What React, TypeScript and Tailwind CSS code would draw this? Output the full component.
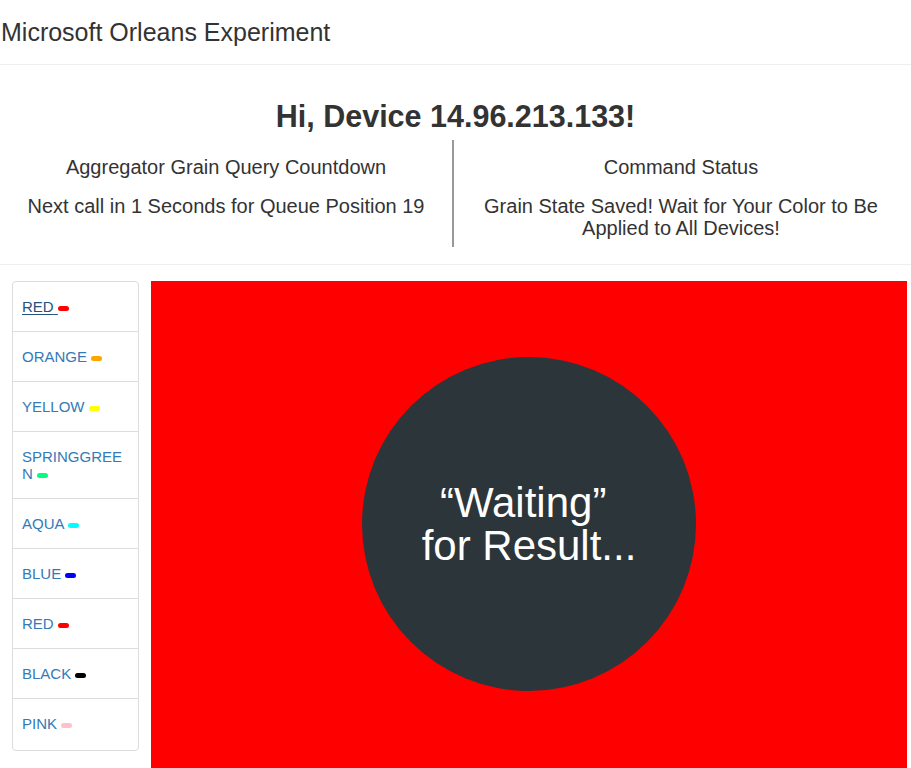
const colors = [
  { name: "RED", swatch: "bg-[#ff0000]", active: true },
  { name: "ORANGE", swatch: "bg-[#ffa500]" },
  { name: "YELLOW", swatch: "bg-[#ffff00]" },
  { name: "SPRINGGREEN", swatch: "bg-[#00ff7f]" },
  { name: "AQUA", swatch: "bg-[#00ffff]" },
  { name: "BLUE", swatch: "bg-[#0000ff]" },
  { name: "RED", swatch: "bg-[#ff0000]" },
  { name: "BLACK", swatch: "bg-[#000000]" },
  { name: "PINK", swatch: "bg-[#ffc0cb]" },
];

function ColorList() {
  return (
    <ul className="w-[127px] shrink-0 rounded-[4px] border border-[#ddd] bg-white">
      {colors.map((c, i) => (
        <li
          key={i}
          className={`px-[9px] py-4 text-[15px] leading-[17px] break-all ${
            i < colors.length - 1 ? "border-b border-[#ddd]" : "pb-[18px]"
          }`}
        >
          <a
            href="#"
            className={
              c.active
                ? "text-[#23527c] underline underline-offset-2"
                : "text-[#337ab7] no-underline"
            }
          >
            {c.name}{" "}
            <span className={`inline-block h-[5px] w-[11px] rounded-full align-middle ${c.swatch}`} />
          </a>
        </li>
      ))}
    </ul>
  );
}

export default function App() {
  return (
    <div className="min-h-screen bg-white text-[#333] font-['Liberation_Sans',Arial,sans-serif]">
      <header className="flex h-[65px] items-center border-b border-[#eee] pl-px">
        <span className="text-[25px] leading-none">Microsoft Orleans Experiment</span>
      </header>

      <section className="border-b border-[#eee] pt-[34px] pb-[17px]">
        <h2 className="text-center text-[30.5px] font-bold leading-[34px]">Hi, Device 14.96.213.133!</h2>
        <div className="mt-[7px] flex text-center text-[20px] leading-[22px]">
          <div className="w-[452px] px-4 pt-4 pb-2">
            <p>Aggregator Grain Query Countdown</p>
            <p className="mt-[17px]">Next call in 1 Seconds for Queue Position 19</p>
          </div>
          <div className="w-[2px] bg-[#999]" />
          <div className="flex-1 pl-4 pr-[19px] pt-4 pb-2">
            <p>Command Status</p>
            <p className="mt-[17px]">Grain State Saved! Wait for Your Color to Be Applied to All Devices!</p>
          </div>
        </div>
      </section>

      <main className="flex items-start gap-3 pt-4 pl-3 pr-1">
        <ColorList />
        <div className="flex h-[500px] flex-1 justify-center bg-[#ff0000] pt-[76px]">
          <div className="flex h-[334px] w-[334px] items-center justify-center rounded-full bg-[#2c3539]">
            <p className="text-center text-[42px] leading-[43px] text-white">
              “Waiting”&nbsp;
              <br />
              for Result...
            </p>
          </div>
        </div>
      </main>
    </div>
  );
}
